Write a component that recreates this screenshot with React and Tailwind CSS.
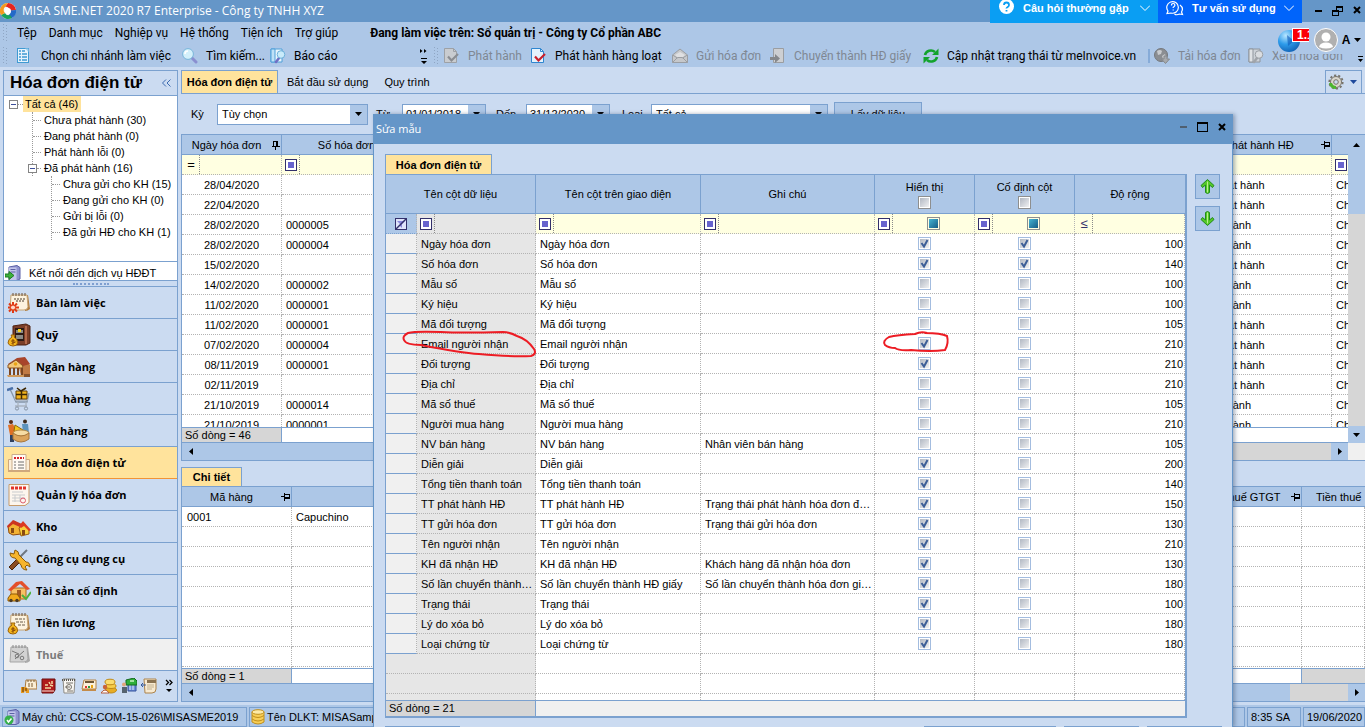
import { Fragment, useState } from "react";

/* ---------- data ---------- */

const menus = ["Tệp", "Danh mục", "Nghiệp vụ", "Hệ thống", "Tiện ích", "Trợ giúp"];

const invoices = [
  { date: "28/04/2020", no: "", status: "Chưa phát hành" },
  { date: "22/04/2020", no: "", status: "Chưa phát hành" },
  { date: "28/02/2020", no: "0000005", status: "Đã phát hành" },
  { date: "28/02/2020", no: "0000004", status: "Đã phát hành" },
  { date: "15/02/2020", no: "", status: "Chưa phát hành" },
  { date: "14/02/2020", no: "0000002", status: "Đã phát hành" },
  { date: "11/02/2020", no: "0000001", status: "Đã phát hành" },
  { date: "11/02/2020", no: "0000001", status: "Chưa phát hành" },
  { date: "07/02/2020", no: "0000004", status: "Chưa phát hành" },
  { date: "08/11/2019", no: "0000001", status: "Chưa phát hành" },
  { date: "02/11/2019", no: "", status: "Chưa phát hành" },
  { date: "21/10/2019", no: "0000014", status: "Đã phát hành" },
  { date: "21/10/2019", no: "0000001", status: "Đã phát hành" },
];

const initialColumns = [
  { name: "Ngày hóa đơn", show: true, pin: true, width: 100 },
  { name: "Số hóa đơn", show: true, pin: true, width: 140 },
  { name: "Mẫu số", show: false, pin: false, width: 100 },
  { name: "Ký hiệu", show: false, pin: false, width: 100 },
  { name: "Mã đối tượng", show: false, pin: false, width: 105 },
  { name: "Email người nhận", show: true, pin: false, width: 210, marked: true },
  { name: "Đối tượng", show: true, pin: false, width: 210 },
  { name: "Địa chỉ", show: false, pin: false, width: 210 },
  { name: "Mã số thuế", show: false, pin: false, width: 105 },
  { name: "Người mua hàng", show: false, pin: false, width: 210 },
  { name: "NV bán hàng", note: "Nhân viên bán hàng", show: false, pin: false, width: 105 },
  { name: "Diễn giải", show: true, pin: false, width: 200 },
  { name: "Tổng tiền thanh toán", show: true, pin: false, width: 140 },
  { name: "TT phát hành HĐ", note: "Trạng thái phát hành hóa đơn điện tử", show: true, pin: false, width: 150 },
  { name: "TT gửi hóa đơn", note: "Trạng thái gửi hóa đơn", show: true, pin: false, width: 130 },
  { name: "Tên người nhận", show: true, pin: false, width: 210 },
  { name: "KH đã nhận HĐ", note: "Khách hàng đã nhận hóa đơn", show: true, pin: false, width: 130 },
  { name: "Số lần chuyển thành HĐ giấy", note: "Số lần chuyển thành hóa đơn giấy", show: true, pin: false, width: 180 },
  { name: "Trạng thái", show: true, pin: false, width: 100 },
  { name: "Lý do xóa bỏ", show: true, pin: false, width: 180 },
  { name: "Loại chứng từ", show: true, pin: false, width: 180 },
];

/* ---------- small glyphs ---------- */

function Triangle({ dir = "down", className = "text-black" }) {
  const points = {
    down: "0,0 7,0 3.5,4",
    up: "0,4 7,4 3.5,0",
    left: "4,0 4,7 0,3.5",
    right: "0,0 0,7 4,3.5",
  };
  const tall = dir === "left" || dir === "right";
  return (
    <svg width={tall ? 4 : 7} height={tall ? 7 : 4} className={`shrink-0 ${className}`} fill="currentColor">
      <polygon points={points[dir]} />
    </svg>
  );
}

function Pin({ upright }) {
  return (
    <svg width="10" height="10" viewBox="0 0 10 10" className="shrink-0" fill="none" stroke="#000" shapeRendering="crispEdges">
      {upright ? (
        <path d="M2.5 1v5M2 1.5h5M6.5 1v5M5.5 1v5M1 6.5h8M4.5 7v3" />
      ) : (
        <path d="M0 4.5h4M3.5 1v8M4 2.5h5M8.5 2v5M4 6.5h5M4 5.5h5" />
      )}
    </svg>
  );
}

function Grip() {
  return (
    <svg width="6" height="18" className="shrink-0" fill="#8fa6c4">
      {[0, 3, 6, 9, 12, 15].map((y) => (
        <Fragment key={y}>
          <rect x="0" y={y} width="1" height="1" />
          <rect x="3" y={y + 1} width="1" height="1" />
        </Fragment>
      ))}
    </svg>
  );
}

function Overflow() {
  return (
    <svg width="8" height="16" viewBox="0 0 8 16" className="shrink-0">
      <path d="M0 1l2.5 2L0 5zM4 1l2.5 2L4 5z" fill="#000" />
      <path d="M1 10h6v1H1zM1 13h6l-3 3z" fill="#000" />
    </svg>
  );
}

/* ---------- toolbar icons ---------- */

function ListIcon() {
  return (
    <svg width="16" height="16" viewBox="0 0 16 16">
      <rect x=".5" y=".5" width="11" height="14" fill="#e6f3fc" stroke="#3f9ad2" />
      <path d="M2 3h2M2 6h2M2 9h2M2 12h2M5 3h3M5 6h5M5 9h5M5 12h5" stroke="#3f9ad2" strokeWidth="1.5" />
      <path d="M8 .5L11.5 4V.5z" fill="#9fd0f0" />
    </svg>
  );
}

function SearchIcon() {
  return (
    <svg width="16" height="16" viewBox="0 0 16 16">
      <path d="M10 10l4 4" stroke="#8a8fd0" strokeWidth="3" strokeLinecap="round" />
      <circle cx="6" cy="6" r="5.4" fill="#d3f0fb" stroke="#78b6da" />
      <path d="M3 6a3 3 0 0 1 3-3" stroke="#fff" strokeWidth="1.5" fill="none" />
    </svg>
  );
}

function ReportIcon({ gray }) {
  const line = gray ? "#8f959c" : "#4f9fd8";
  const face = gray ? "#cdd2d8" : "#e9f5fd";
  return (
    <svg width="16" height="16" viewBox="0 0 16 16">
      <path d="M1 1h11v13H1z" fill={face} stroke={line} />
      <path d="M1 1h4v13H1z" fill={gray ? "#dfe2e5" : "#bfe1f7"} stroke={line} />
      <path d="M9 10l-3 4" stroke={gray ? "#a0a4aa" : "#6f6fc4"} strokeWidth="2.5" strokeLinecap="round" />
      <circle cx="11" cy="6.5" r="3.8" fill={gray ? "#dadde1" : "#c9ebfa"} stroke={gray ? "#9a9fa5" : "#6db0da"} />
    </svg>
  );
}

function DocCheckIcon({ gray }) {
  return (
    <svg width="16" height="16" viewBox="0 0 16 16">
      <path d="M.5.5h9l3 3v11H.5z" fill={gray ? "#c9ccd0" : "#e4f2fd"} stroke={gray ? "#9da1a6" : "#2f86d0"} />
      <path d="M9.5.5v3h3" fill="none" stroke={gray ? "#9da1a6" : "#2f86d0"} />
      <path d="M4 8.500l3.500 4L14 6" fill="none" stroke={gray ? "#8a8d92" : "#c8202c"} strokeWidth="2.2" />
    </svg>
  );
}

function EnvelopeIcon() {
  return (
    <svg width="16" height="16" viewBox="0 0 16 16">
      <path d="M.5 7L8 1l7.500 6v7.500H.5z" fill="#c6c8cb" stroke="#9b9ea3" />
      <path d="M3 7l5-3 5 3-3 3H6z" fill="#dfe0e2" />
      <path d="M.5 14.500l5-5h5l5 5M.5 7l5 3M15.500 7l-5 3" fill="none" stroke="#9b9ea3" />
    </svg>
  );
}

function DocArrowIcon() {
  return (
    <svg width="16" height="16" viewBox="0 0 16 16">
      <path d="M3.500.5h10v14h-10z" fill="#cdcfd2" stroke="#9a9da1" />
      <path d="M0 9h5V6l5 4.500L5 15v-3H0z" fill="#85888c" />
    </svg>
  );
}

function RefreshIcon() {
  return (
    <svg width="16" height="16" viewBox="0 0 16 16" fill="none" stroke="#12a32c" strokeWidth="2.6">
      <path d="M2 7a6 5.500 0 0 1 10-3" />
      <path d="M14 9a6 5.500 0 0 1-10 3" />
      <path d="M15.500.5v6.500H9zM.5 15.500V9H7z" fill="#12a32c" stroke="none" />
    </svg>
  );
}

function DownloadIcon() {
  return (
    <svg width="16" height="16" viewBox="0 0 16 16">
      <circle cx="7" cy="7" r="6.500" fill="#8b8e92" stroke="#75787c" />
      <path d="M3 3q3-2 5 0l-1 3-3 1zM8 8l3-2 1 3-3 2z" fill="#c9cbce" />
      <path d="M10 8h3v3h2.500l-4 4.500L7.500 11H10z" fill="#a7aaae" stroke="#85888c" />
    </svg>
  );
}

/* ---------- sidebar icons ---------- */

function NotePad({ gray, children }) {
  return (
    <svg width="24" height="24" viewBox="0 0 24 24">
      <path d="M18 4h3l2 14q-2 2-5 2z" fill={gray ? "#a9a9a9" : "#b07c3e"} />
      <path d="M4 4h16l1 12q-1 3-4 3H3z" fill={gray ? "#d2d2d2" : "#fdf3df"} stroke={gray ? "#a5a5a5" : "#c8a574"} />
      <path d="M6 2v3M9 2v3M12 2v3M15 2v3M18 2v3" stroke={gray ? "#888" : "#6b5136"} />
      {children}
    </svg>
  );
}

function MoneyBag() {
  return (
    <>
      <path d="M4 12h4l-1 2q4 2 3.500 6-.5 3-4.500 3t-5-3q0-4 4-6z" fill="#f3b41c" stroke="#9c6208" />
      <path d="M7.500 17.500q-3-1-3 .5t3 1-3 1.500M6 16v6" fill="none" stroke="#7b3c05" strokeWidth=".8" />
    </>
  );
}

function DeskIcon() {
  return (
    <NotePad>
      <path d="M7 8h11M9 10h9" stroke="#4a3c2c" strokeDasharray="2 1" />
      <path d="M6 11v11M1 16.500h11M2 12.500l8 8M10 12.500l-8 8" stroke="#e03a14" strokeWidth="2" />
      <circle cx="6" cy="16.500" r="2.500" fill="#ffd9c8" stroke="#e03a14" />
    </NotePad>
  );
}

function SafeIcon() {
  return (
    <svg width="24" height="24" viewBox="0 0 24 24">
      <path d="M6 3l13-2 4 2v17l-4 2H6z" fill="#7c3f28" stroke="#4f2212" />
      <path d="M8 5h9v13H8z" fill="#2c1a14" />
      <path d="M9 7h7v3H9zM9 12h7v4H9z" fill="#8b8a86" />
      <path d="M11 6h3v3h-3z" fill="#f5d423" />
      <path d="M19 3v18" stroke="#b3694a" strokeWidth="2" />
      <MoneyBag />
    </svg>
  );
}

function BankIcon() {
  return (
    <svg width="24" height="24" viewBox="0 0 24 24">
      <path d="M11 8l9-1 3 3v9l-9 2z" fill="#c07a45" />
      <path d="M1 9l9-6 8-1 5 7-7 2z" fill="#a8442b" />
      <path d="M1 10l8-5 7 6-1 2H1z" fill="#f4c878" stroke="#8a5324" />
      <path d="M3 13v7M7 13v7M11 13v7M15 13v7" stroke="#7a4521" strokeWidth="2" />
      <path d="M0 20h17l2 2H1z" fill="#d09a5c" />
      <path d="M17 19h6v3h-6z" fill="#84512d" />
      <circle cx="8.500" cy="9" r="1.800" fill="#e8a414" />
    </svg>
  );
}

function BuyIcon() {
  return (
    <svg width="24" height="24" viewBox="0 0 24 24" fill="none">
      <path d="M3 2l6 13h11l2-9" stroke="#8696a8" strokeWidth="1.3" />
      <path d="M7 11h14M8 13h13M11 15v5M19 15v4M8 19h12" stroke="#aab4c0" strokeWidth="1.3" />
      <path d="M9 4h11v8H9z" fill="#f0b41e" stroke="#6a4305" />
      <path d="M14.500 4v8M9 7.500h11M10 1l4 3 5-3" stroke="#3d2703" strokeWidth="1.5" />
      <circle cx="10" cy="21.500" r="1.600" stroke="#8795a5" />
      <circle cx="19" cy="21.500" r="1.600" stroke="#8795a5" />
      <path d="M0 3l6-2" stroke="#4a70a8" strokeWidth="2.5" />
    </svg>
  );
}

function SellIcon() {
  return (
    <svg width="24" height="24" viewBox="0 0 24 24">
      <circle cx="4" cy="3" r="2" fill="#5a2d14" />
      <path d="M1 6l5-1 3 6-2 5H3z" fill="#e06f24" />
      <path d="M3 16h4v7H3z" fill="#2e3f5f" />
      <circle cx="18" cy="2.500" r="2" fill="#3d2a1a" />
      <path d="M15 5h6l1 9h-6z" fill="#5c93bd" />
      <path d="M8 6l8 5-4 4-5-3z" fill="#f5c81c" stroke="#8f6a06" />
      <ellipse cx="14" cy="14" rx="8" ry="3" fill="#f6dca4" stroke="#b58b49" />
      <path d="M6 14v6q8 6 16 0v-6q-8 6-16 0z" fill="#dba45c" stroke="#a9773b" />
    </svg>
  );
}

function InvoiceIcon() {
  return (
    <svg width="24" height="24" viewBox="0 0 24 24">
      <path d="M1.500 8.500h4v11h-4zM18.500 8.500h4v11h-4z" fill="#fbeed8" stroke="#cfa87c" />
      <path d="M5 3.500h14v16H5z" fill="#fffaf3" stroke="#c9ad8b" />
      <path d="M7 7h10" stroke="#d8232b" strokeWidth="2" strokeDasharray="2 1" />
      <path d="M7 11h2M7 14h2M7 17h2M11 11h6M11 14h6M11 17h6" stroke="#6f6f6f" />
      <path d="M1 20h22" stroke="#cfa87c" strokeWidth="2" />
    </svg>
  );
}

function InvoiceManageIcon() {
  return (
    <svg width="24" height="24" viewBox="0 0 24 24">
      <path d="M2 1.500h20v18l-4 3H2z" fill="#fdf6ee" stroke="#c79b6a" />
      <path d="M4 5h16" stroke="#e2342c" strokeWidth="3" strokeDasharray="3 1" />
      <path d="M5 9h11M5 12h13M5 15h13M5 18h8M8 12v7M13 12v7" stroke="#c9cbcd" />
      <circle cx="16" cy="17.500" r="2.500" fill="none" stroke="#dc5b70" />
    </svg>
  );
}

function WarehouseIcon() {
  return (
    <svg width="24" height="24" viewBox="0 0 24 24">
      <path d="M1 11l6-5 7 5v8l-8 1-4-2z" fill="#f3b234" stroke="#8f4b0c" />
      <path d="M0 11l6-6 9 4-2 3-7-3-5 4z" fill="#cc3520" />
      <path d="M12 13l5-4 5 5v5l-8 2z" fill="#f8cf3d" stroke="#9b5a10" />
      <path d="M12 11l4-5 8 9-2 1-5-5-3 2z" fill="#dc3a23" />
      <path d="M4 13h3v5H4zM15 15h3v5h-3z" fill="#8a4a10" />
    </svg>
  );
}

function ToolsIcon() {
  return (
    <svg width="24" height="24" viewBox="0 0 24 24">
      <path d="M20 3L9 14" stroke="#6f7780" strokeWidth="2" />
      <path d="M10 12l3 3-8 8-3-3z" fill="#8a4c22" stroke="#4b2409" />
      <path d="M3 6l4 1 1-4q4 1 4 5l7 7q4 0 4 5l-3-2-2 2 2 3q-5 0-6-5L8 11q-5 0-5-5z" fill="#f6b52c" stroke="#8b5a0a" />
    </svg>
  );
}

function AssetIcon() {
  return (
    <svg width="24" height="24" viewBox="0 0 24 24">
      <path d="M4 9h15v11H4z" fill="#f7c064" stroke="#b06a1d" />
      <path d="M1 11L9 3l6-1 8 8-3 1-7-6-9 7z" fill="#e4502b" />
      <path d="M10 11h4v8h-4z" fill="#a35a23" />
      <path d="M1 19l3-4h6l3 4v3H1z" fill="#f2a91b" stroke="#8f5a07" />
      <circle cx="4" cy="21.500" r="1.700" fill="#4a3a26" />
      <circle cx="10" cy="21.500" r="1.700" fill="#4a3a26" />
      <path d="M15 16l4 4 5-7" fill="none" stroke="#4db13e" strokeWidth="2" />
    </svg>
  );
}

function SalaryIcon() {
  return (
    <NotePad>
      <path d="M8 8h10M9 11h9M11 14h7" stroke="#6b5d4b" strokeDasharray="3 1" />
      <MoneyBag />
    </NotePad>
  );
}

function TaxIcon() {
  return (
    <NotePad gray>
      <path d="M5 8l7 3M8 16l9-8" stroke="#777" />
      <circle cx="10" cy="13" r="1.800" fill="none" stroke="#777" />
      <circle cx="15" cy="15" r="1.800" fill="none" stroke="#777" />
    </NotePad>
  );
}

const navItems = [
  { label: "Bàn làm việc", Icon: DeskIcon },
  { label: "Quỹ", Icon: SafeIcon },
  { label: "Ngân hàng", Icon: BankIcon },
  { label: "Mua hàng", Icon: BuyIcon },
  { label: "Bán hàng", Icon: SellIcon },
  { label: "Hóa đơn điện tử", Icon: InvoiceIcon, active: true },
  { label: "Quản lý hóa đơn", Icon: InvoiceManageIcon },
  { label: "Kho", Icon: WarehouseIcon },
  { label: "Công cụ dụng cụ", Icon: ToolsIcon },
  { label: "Tài sản cố định", Icon: AssetIcon },
  { label: "Tiền lương", Icon: SalaryIcon },
  { label: "Thuế", Icon: TaxIcon, disabled: true },
];

function ServerIcon({ children }) {
  return (
    <svg width="16" height="16" viewBox="0 0 16 16" className="shrink-0">
      <path d="M4 2l8-1.500 3 2V14l-3 1.500H4z" fill="#8f93cf" stroke="#5c61a6" />
      <path d="M4 2.500h7.500V15H4z" fill="#c3c6ec" />
      <path d="M5.500 4.500h5M5.500 7h5" stroke="#5c61a6" />
      {children}
    </svg>
  );
}

// shortcuts under the navigation list
const shortcuts = [
  {
    label: "Giá thành",
    art: (
      <>
        <path d="M5 2h10l1 9H4z" fill="#fbeed6" stroke="#a8793e" />
        <path d="M6 3h8M7 6h6M7 8h6" stroke="#7b5a30" strokeDasharray="2 1" />
        <path d="M0 9h5l3 3v3H5l-1-3-1 3H0z" fill="#e99a1d" />
        <path d="M2 9v5M5 10v3" stroke="#5f3206" />
      </>
    ),
  },
  {
    label: "Sổ cái",
    art: (
      <>
        <path d="M1 1h13v11l-2 3H1z" fill="#b01c1c" stroke="#6d0c0c" />
        <path d="M4 7h3M8 4l1 2M11 3v3M4 10h6M9 7l3 1" stroke="#f4d9a0" strokeWidth="1.5" />
        <path d="M1 13h12" stroke="#f3e3d8" />
      </>
    ),
  },
  {
    label: "Hợp đồng",
    art: (
      <>
        <path d="M2 1h12l-1 14H3z" fill="#f8f6f2" stroke="#8d8a84" />
        <path d="M1 2h14" stroke="#5b5852" strokeWidth="2" strokeDasharray="1 1" />
        <path d="M5 5h7M4 9h5M6 13h6" stroke="#77736b" />
        <circle cx="8" cy="9" r="2.500" fill="none" stroke="#77736b" />
      </>
    ),
  },
  {
    label: "Ngân sách",
    art: (
      <>
        <path d="M3 2h12v9H1z" fill="#fcf0da" stroke="#b58448" />
        <path d="M4 4h9" stroke="#6d5636" strokeWidth="2" />
        <path d="M1 11h14v2H1z" fill="#c48c4a" />
        <path d="M5 10V8" stroke="#d33" strokeWidth="2" />
        <path d="M8 10V8" stroke="#2a9a3c" strokeWidth="2" />
        <path d="M11 10V7" stroke="#e7a313" strokeWidth="2" />
      </>
    ),
  },
  {
    label: "Thủ quỹ",
    art: (
      <>
        <ellipse cx="10" cy="12" rx="5.500" ry="3" fill="#e8ad25" stroke="#c08a18" />
        <ellipse cx="10" cy="8" rx="5" ry="2.500" fill="#f7cd4a" stroke="#c08a18" />
        <ellipse cx="9" cy="4" rx="5" ry="2.800" fill="#fbdc6d" stroke="#c08a18" />
        <circle cx="4" cy="9" r="2.200" fill="#c9643a" />
        <path d="M0 15q4-6 8 0z" fill="#fff" stroke="#b55a3a" />
      </>
    ),
  },
  {
    label: "Thủ kho",
    art: (
      <>
        <path d="M7 5h8v8H7z" fill="#6f8fd8" stroke="#32509a" />
        <path d="M9 6v6M12 6v6" stroke="#e5ecfb" />
        <path d="M5 2l8-2 3 3v4H5z" fill="#2fae3a" stroke="#156a1e" />
        <path d="M9 3h4" stroke="#c8f0c0" strokeWidth="1.5" />
        <circle cx="3" cy="6.500" r="2" fill="#e2a57c" />
        <path d="M1 9h5v6H1z" fill="#56636f" />
      </>
    ),
  },
  {
    label: "Công văn",
    art: (
      <>
        <path d="M3 1h12v10q0 4-4 4H4z" fill="#f7ead2" stroke="#ac834b" />
        <path d="M6 2h9v3H6z" fill="#8a7352" />
        <path d="M6 7h7M6 9h7M6 11h5" stroke="#c3b291" />
        <path d="M0 7h5M2 5L0 7l2 2" stroke="#35589a" fill="none" />
      </>
    ),
  },
];

/* ---------- building blocks ---------- */

function FilterMark() {
  return (
    <button className="flex size-3 shrink-0 items-center justify-center border border-[#33306b] bg-white" aria-label="Điều kiện lọc">
      <span className="size-1.5 bg-[#6763cd]" />
    </button>
  );
}

function FilterCell({ mark, label, checkbox, className = "bg-[#ffffe1]" }) {
  return (
    <td className={`h-5 border-r border-b border-dotted border-[#b3b3b3] p-0 ${className}`}>
      <div className="flex h-[19px] items-center gap-0.5 overflow-hidden pl-[3px]">
        {mark || <FilterMark />}
        <span className="h-full border-r border-dotted border-[#8a8a8a]" />
        {checkbox ? (
          <span className="flex flex-1 justify-center pr-0.5">
            <input
              type="checkbox"
              aria-label={label}
              className="size-[13px] appearance-none border border-[#8e8f8f] bg-linear-to-br from-[#4cc0dc] to-[#12527e] bg-clip-content p-px"
            />
          </span>
        ) : (
          <input type="text" aria-label={label} className="w-full min-w-0 flex-1 bg-transparent outline-none" />
        )}
      </div>
    </td>
  );
}

function CheckBox({ label, checked, onChange, dark }) {
  return (
    <span className="relative flex size-[13px] bg-white">
      <input
        type="checkbox"
        aria-label={label}
        checked={checked}
        onChange={onChange}
        className={`size-[13px] appearance-none border bg-linear-to-br from-[#aab1bd] to-[#f8f8f8] bg-clip-content p-px ${
          dark ? "border-[#8e8f8f]" : "border-[#a3bcdf]"
        }`}
      />
      {checked && (
        <svg width="13" height="13" className="pointer-events-none absolute inset-0" fill="none" stroke="#3c5e97" strokeWidth="2">
          <path d="M3.500 6l2.500 3.500L9.500 3" />
        </svg>
      )}
    </span>
  );
}

function HeaderCell({ children, pin, colSpan, className = "" }) {
  return (
    <th colSpan={colSpan} className={`h-5 border-r border-b border-[#7ba1cf] bg-[#adc7e7] p-0 font-normal ${className}`}>
      <div className="flex items-center overflow-hidden whitespace-nowrap">
        <span className="flex-1">{children}</span>
        {pin && <Pin upright={pin === "up"} />}
      </div>
    </th>
  );
}

const cell = "h-5 overflow-hidden border-r border-b border-dotted border-[#b3b3b3] p-0 whitespace-nowrap";

function ToolButton({ icon, children, className = "", disabled }) {
  return (
    <button
      disabled={disabled}
      className={`flex shrink-0 items-center gap-2 whitespace-nowrap ${disabled ? "text-[#7f8793]" : "text-black"} ${className}`}
    >
      <span className="shrink-0">{icon}</span>
      {children}
    </button>
  );
}

function Combo({ id, value, options = [], className }) {
  return (
    <span className={`flex h-[21px] border border-[#7ba1cf] bg-white ${className}`}>
      <select id={id} defaultValue={value} className="min-w-0 flex-1 appearance-none bg-white pl-1 outline-none">
        {[value, ...options].map((o) => (
          <option key={o}>{o}</option>
        ))}
      </select>
      <span className="flex w-[17px] items-center justify-center bg-[#adc7e7]">
        <Triangle />
      </span>
    </span>
  );
}

function DateBox({ id, value }) {
  return (
    <span className="flex h-[21px] w-21 border border-[#7ba1cf] bg-white">
      <input id={id} type="text" defaultValue={value} className="min-w-0 flex-1 pl-[3px] outline-none" />
      <button aria-label="Chọn ngày" className="flex w-[17px] items-center justify-center bg-[#adc7e7]">
        <Triangle />
      </button>
    </span>
  );
}

/* ---------- window chrome ---------- */

function TitleBar() {
  return (
    <header className="flex h-[22px] shrink-0 items-center bg-[#6596c8] font-['Open_Sans',sans-serif] text-white">
      <svg width="18" height="18" viewBox="0 0 18 18" className="shrink-0">
        <circle cx="8" cy="9" r="8" fill="#f3f6fb" />
        <path d="M8 1a8 8 0 0 1 8 7l-6 1a4 4 0 0 0-5-4z" fill="#e5261f" />
        <path d="M16 8a8 8 0 0 1-5 8.500l-3-3a4 4 0 0 0 2-5z" fill="#2469c8" />
        <path d="M12 16A8 8 0 0 1 1 13l4-2a4 4 0 0 0 5 2z" fill="#17a35d" />
        <path d="M1 13A8 8 0 0 1 8 1L5 5a4 4 0 0 0 0 6z" fill="#f39a1d" />
        <circle cx="8" cy="9" r="3" fill="#fff" />
      </svg>
      <h1 className="flex-1 pl-1 text-[12px]">MISA SME.NET 2020 R7 Enterprise - Công ty TNHH XYZ</h1>
      <div className="z-10 flex h-[23px] self-start font-['Liberation_Sans',sans-serif] text-[11px] font-bold">
        <button className="flex w-42 items-center bg-[#0a9ef3] pr-2 pb-2 pl-2">
          <svg width="17" height="17" viewBox="0 0 17 17">
            <circle cx="8.500" cy="7.500" r="7.500" fill="#fff" />
            <path d="M6 6q0-2.500 2.500-2.500T11 6q0 1.200-1.300 2T8.500 9.500M8.500 11v1.500" stroke="#0a9ef3" strokeWidth="1.8" fill="none" />
          </svg>
          <span className="flex-1 pl-2 text-left">Câu hỏi thường gặp</span>
          <svg width="10" height="6" fill="none" stroke="#fff">
            <path d="M0 .5l5 5 5-5" />
          </svg>
        </button>
        <button className="flex w-36 items-center bg-[#0064fb] pr-2 pb-2 pl-2">
          <svg width="18" height="16" viewBox="0 0 18 16" fill="none" stroke="#fff" strokeWidth="1.2">
            <path d="M2 11a5.800 5.800 0 1 1 3 2l-4 .5z" />
            <path d="M14 5q4 3 1.500 7l1 2.500-3-.5q-3 1.500-5 0" />
            <path d="M5.500 5.500q0-2 1.700-2t1.700 1.800q0 1-1.700 2v.7M7.200 9.500v1" />
          </svg>
          <span className="flex-1 pl-2 text-left">Tư vấn sử dụng</span>
          <svg width="10" height="6" fill="none" stroke="#fff">
            <path d="M0 .5l5 5 5-5" />
          </svg>
        </button>
      </div>
      <div className="flex w-[63px] items-center justify-end gap-2.5 pr-1 text-black">
        <button aria-label="Thu nhỏ">
          <svg width="7" height="10"><path d="M0 4h7v2H0z" /></svg>
        </button>
        <button aria-label="Khôi phục">
          <svg width="11" height="10" fill="none" stroke="#000" shapeRendering="crispEdges">
            <path d="M.5 4.500h6v5h-6zM.5 5.500h6M4.500 4V.5h6v5h-4M4.500 1.500h6" />
          </svg>
        </button>
        <button aria-label="Đóng">
          <svg width="8" height="10" stroke="#000" strokeWidth="2"><path d="M1 1l6 6M7 1L1 7" /></svg>
        </button>
      </div>
    </header>
  );
}

function MenuAndToolbar() {
  return (
    <div className="relative shrink-0 bg-[#adc7e7] font-['Roboto',sans-serif] text-[12px] text-black">
      <nav className="flex h-[22px] items-center gap-3 pl-[3px]">
        <span className="-mr-1">
          <Grip />
        </span>
        {menus.map((m) => (
          <button key={m}>{m}</button>
        ))}
        <span className="pl-5 font-bold">Đang làm việc trên: Sổ quản trị - Công ty Cổ phần ABC</span>
      </nav>

      <div className="flex h-[23px] items-center overflow-hidden">
        <div className="flex w-[434px] shrink-0 items-center pl-[3px]">
          <Grip />
          <ToolButton icon={<ListIcon />} className="ml-2 w-[165px]">Chọn chi nhánh làm việc</ToolButton>
          <ToolButton icon={<SearchIcon />} className="w-[88px]">Tìm kiếm...</ToolButton>
          <ToolButton icon={<ReportIcon />} className="flex-1">Báo cáo</ToolButton>
          <span className="pr-1.5"><Overflow /></span>
        </div>
        <Grip />
        <ToolButton icon={<DocCheckIcon gray />} className="ml-1 w-[87px]" disabled>Phát hành</ToolButton>
        <ToolButton icon={<DocCheckIcon />} className="w-[141px]">Phát hành hàng loạt</ToolButton>
        <ToolButton icon={<EnvelopeIcon />} className="w-[98px]" disabled>Gửi hóa đơn</ToolButton>
        <ToolButton icon={<DocArrowIcon />} className="w-[153px]" disabled>Chuyển thành HĐ giấy</ToolButton>
        <ToolButton icon={<RefreshIcon />} className="w-[225px]">Cập nhật trạng thái từ meInvoice.vn</ToolButton>
        <span className="mr-1 h-3.5 w-0.5 shrink-0 bg-[#86abd8]" />
        <ToolButton icon={<DownloadIcon />} className="w-[94px]" disabled>Tải hóa đơn</ToolButton>
        <ToolButton icon={<ReportIcon gray />} className="flex-1" disabled>Xem hóa đơn</ToolButton>
        <svg width="7" height="7" className="mt-2 shrink-0"><path d="M0 0h5v1H0zM0 3h5L2.500 6z" /></svg>
      </div>

      {/* account area floats over both bars */}
      <div className="absolute top-1 right-1 flex h-7 items-center bg-[#adc7e7] font-['Liberation_Sans',sans-serif] text-[12px] font-bold">
        <span className="relative mr-1 h-6 w-8">
          <svg width="24" height="24" viewBox="0 0 24 24">
            <defs>
              <radialGradient id="orb" cx=".35" cy=".25" r=".9">
                <stop offset="0" stopColor="#b9e6ff" />
                <stop offset=".45" stopColor="#2d9bea" />
                <stop offset="1" stopColor="#0a54a8" />
              </radialGradient>
            </defs>
            <circle cx="11" cy="13" r="11" fill="url(#orb)" />
            <path d="M9 7l7 6-6 5z" fill="#0d57b5" opacity=".6" />
          </svg>
          <span className="absolute top-0 left-3.5 h-3.5 w-[17px] overflow-hidden border border-r-0 border-white bg-[#fb0007] pl-1 leading-3 text-white">
            1.1
          </span>
        </span>
        <button className="flex items-center gap-0.5" aria-label="Tài khoản A">
          <svg width="24" height="24" viewBox="0 0 24 24">
            <circle cx="12" cy="12" r="11.500" fill="#b0b0b0" stroke="#fff" />
            <circle cx="12" cy="9" r="4.500" fill="#fff" />
            <path d="M5 19q1-4.500 7-4.500t7 4.500q-7 3-14 0z" fill="#fff" />
          </svg>
          <span className="w-3">A</span>
          <Triangle />
        </button>
      </div>
    </div>
  );
}

/* ---------- sidebar ---------- */

function ExpandBox() {
  return (
    <svg width="9" height="9" className="shrink-0" shapeRendering="crispEdges">
      <rect x=".5" y=".5" width="8" height="8" fill="#fff" stroke="#848484" />
      <path d="M2 4.500h5" stroke="#3d4f9b" />
    </svg>
  );
}

function TreeLeaf({ children }) {
  return (
    <li className="flex h-4 items-center gap-[3px]">
      <span className="w-2 border-t border-dotted border-[#9a9a9a]" />
      <button className="whitespace-nowrap">{children}</button>
    </li>
  );
}

function Sidebar() {
  return (
    <aside className="flex w-[175px] shrink-0 flex-col border border-[#7ba1cf] bg-[#cbdbf1]">
      <div className="flex h-[25px] shrink-0 items-center justify-between border-b border-[#7ba1cf] pr-1.5 pl-1.5">
        <h2 className="text-[17px] font-bold whitespace-nowrap">Hóa đơn điện tử</h2>
        <button aria-label="Thu gọn">
          <svg width="9" height="8" fill="none" stroke="#3c6bb0">
            <path d="M4 .5L.5 4 4 7.500M8.500.5L5 4l3.500 3.500" />
          </svg>
        </button>
      </div>

      <div className="min-h-0 flex-1 overflow-hidden bg-white">
        <div className="flex h-4 items-center pl-[5px]">
          <ExpandBox />
          <span className="w-[5px] border-t border-dotted border-[#9a9a9a]" />
          <button className="h-4 bg-[#ffe39c] pr-[3px] pl-0.5 whitespace-nowrap">Tất cả (46)</button>
        </div>
        <ul className="ml-[28px] border-l border-dotted border-[#9a9a9a]">
          <TreeLeaf>Chưa phát hành (30)</TreeLeaf>
          <TreeLeaf>Đang phát hành (0)</TreeLeaf>
          <TreeLeaf>Phát hành lỗi (0)</TreeLeaf>
          <li className="-ml-[5px] flex h-4 items-center">
            <ExpandBox />
            <span className="mr-[3px] w-1 border-t border-dotted border-[#9a9a9a]" />
            <button>Đã phát hành (16)</button>
          </li>
        </ul>
        <ul className="ml-[47px] border-l border-dotted border-[#9a9a9a]">
          <TreeLeaf>Chưa gửi cho KH (15)</TreeLeaf>
          <TreeLeaf>Đang gửi cho KH (0)</TreeLeaf>
          <TreeLeaf>Gửi bị lỗi (0)</TreeLeaf>
          <TreeLeaf>Đã gửi HĐ cho KH (1)</TreeLeaf>
        </ul>
      </div>

      <button className="flex h-5 shrink-0 items-start gap-2 overflow-hidden border-y border-[#7ba1cf] bg-white pt-[3px] pl-px text-left whitespace-nowrap">
        <ServerIcon>
          <path d="M0 9h4V6.500l5 4-5 4V12H0z" fill="#3db13a" stroke="#1d7a22" />
        </ServerIcon>
        Kết nối đến dịch vụ HĐĐT
      </button>
      <div className="flex h-[5px] shrink-0 items-center justify-center">
        <span className="w-9 border-t-2 border-dotted border-[#7f9fd0]" />
      </div>

      <nav className="shrink-0 border-t border-[#7ba1cf] font-['Open_Sans',sans-serif] text-[11px] font-bold">
        {navItems.map(({ label, Icon, active, disabled }) => (
          <button
            key={label}
            disabled={disabled}
            className={`flex h-8 w-full items-center gap-[5px] border-b pl-[3px] ${
              active ? "border-[#f29436] bg-[#ffe39c]" : "border-[#7ba1cf]"
            } ${disabled ? "bg-[#f0f0f0] text-[#7a7a7a]" : "text-black"}`}
          >
            <Icon />
            {label}
          </button>
        ))}
      </nav>
      <div className="flex h-[30px] shrink-0 items-center gap-1 pl-[17px]">
        {shortcuts.map((s) => (
          <button key={s.label} aria-label={s.label}>
            <svg width="16" height="16" viewBox="0 0 16 16">{s.art}</svg>
          </button>
        ))}
        <button aria-label="Thêm" className="pl-1">
          <svg width="8" height="14" fill="none" stroke="#000">
            <path d="M1 1l2.500 2.500L1 6M4.500 1L7 3.500 4.500 6" strokeWidth="1.3" />
            <path d="M1 10h6l-3 3z" fill="#000" stroke="none" />
          </svg>
        </button>
      </div>
    </aside>
  );
}

/* ---------- main area ---------- */

function HScroll({ trackClass }) {
  return (
    <div className="flex h-[19px] shrink-0 border-y border-[#7ba1cf] bg-[#d6d6d6]">
      <button aria-label="Cuộn trái" className="flex w-[17px] items-center justify-center bg-[#adc7e7]">
        <Triangle dir="left" />
      </button>
      <span className="flex-1 bg-[#adc7e7]" />
      <span className={trackClass} />
      <button aria-label="Cuộn phải" className="flex w-[17px] items-center justify-center bg-[#adc7e7]">
        <Triangle dir="right" />
      </button>
    </div>
  );
}

function InvoiceGrid() {
  return (
    <section className="flex h-[327px] shrink-0 border-t border-l border-[#7ba1cf] bg-white">
      <div className="flex min-w-0 flex-1 flex-col">
        <div className="min-h-0 flex-1 overflow-hidden">
          <table className="w-full table-fixed border-separate border-spacing-0">
            <colgroup>
              <col className="w-[100px]" />
              <col className="w-[140px]" />
              <col />
              <col className="w-[150px]" />
              <col className="w-[16px]" />
            </colgroup>
            <thead>
              <tr>
                <HeaderCell pin="up">Ngày hóa đơn</HeaderCell>
                <HeaderCell pin="side">Số hóa đơn</HeaderCell>
                <HeaderCell />
                <HeaderCell pin="side">TT phát hành HĐ</HeaderCell>
                <th className="h-5 border-b border-[#7ba1cf] bg-[#adc7e7] p-0" />
              </tr>
            </thead>
            <tbody>
              <tr>
                <FilterCell label="Lọc ngày hóa đơn" mark={<button className="w-3 text-[13px] leading-none">=</button>} />
                <FilterCell label="Lọc số hóa đơn" />
                <FilterCell label="Lọc" />
                <FilterCell label="Lọc trạng thái" />
                <td className="overflow-hidden border-b border-dotted border-[#b3b3b3] bg-[#ffffe1] p-0 pl-[3px]">
                  <FilterMark />
                </td>
              </tr>
              {invoices.map((r, i) => (
                <tr key={i}>
                  <td className={`${cell} text-center`}>{r.date}</td>
                  <td className={`${cell} pl-1`}>{r.no}</td>
                  <td className={cell} />
                  <td className={`${cell} pl-[3px]`}>{r.status}</td>
                  <td className="overflow-hidden border-b border-dotted border-[#b3b3b3] p-0 pl-1 whitespace-nowrap">
                    Chưa gửi
                  </td>
                </tr>
              ))}
            </tbody>
          </table>
        </div>
        <div className="flex h-[15px] shrink-0 border-t border-[#7ba1cf]">
          <span className="w-[100px] border-r border-[#7ba1cf] bg-[#d6d6d6] pl-[3px] leading-[14px]">Số dòng = 46</span>
        </div>
        <HScroll trackClass="w-44 bg-[#d6d6d6]" />
      </div>
      <div className="flex w-[17px] shrink-0 flex-col bg-[#d6d6d6]">
        <button aria-label="Cuộn lên" className="flex h-5 items-center justify-center bg-[#adc7e7]">
          <Triangle dir="up" />
        </button>
        <span className="h-[59px] bg-[#adc7e7]" />
        <span className="flex-1" />
        <button aria-label="Cuộn xuống" className="flex h-[17px] items-center justify-center bg-[#adc7e7]">
          <Triangle />
        </button>
        <span className="h-[18px] border-b border-[#7ba1cf] bg-[#f0f0f0]" />
      </div>
    </section>
  );
}

function DetailGrid() {
  return (
    <section className="flex min-h-0 flex-1 flex-col border-t border-l border-[#7ba1cf] bg-white">
      <div className="min-h-0 flex-1 overflow-hidden">
        <table className="w-full table-fixed border-separate border-spacing-0">
          <colgroup>
            <col className="w-[110px]" />
            <col />
            <col className="w-[100px]" />
            <col className="w-[63px]" />
          </colgroup>
          <thead>
            <tr>
              <HeaderCell pin="side">Mã hàng</HeaderCell>
              <HeaderCell />
              <HeaderCell pin="side">% thuế GTGT</HeaderCell>
              <th className="h-5 overflow-hidden border-b border-[#7ba1cf] bg-[#adc7e7] p-0 pl-3.5 text-left font-normal whitespace-nowrap">
                Tiền thuế
              </th>
            </tr>
          </thead>
          <tbody>
            <tr>
              <td className={`${cell} pl-[5px]`}>0001</td>
              <td className={`${cell} pl-1`}>Capuchino</td>
              <td className={cell} />
              <td className={cell} />
            </tr>
            {Array.from({ length: 8 }, (_, i) => (
              <tr key={i}>
                <td className={cell} />
                <td className={cell} />
                <td className={cell} />
                <td className={cell} />
              </tr>
            ))}
          </tbody>
        </table>
      </div>
      <div className="flex h-[15px] shrink-0 border-t border-[#7ba1cf]">
        <span className="w-[110px] border-r border-[#7ba1cf] bg-[#d6d6d6] pl-[3px] leading-[14px]">Số dòng = 1</span>
        <span className="flex-1 border-r border-[#7ba1cf]" />
        <span className="w-[63px] bg-[#d6d6d6]" />
      </div>
      <HScroll trackClass="w-[58px] bg-[#d6d6d6]" />
    </section>
  );
}

function MainArea() {
  return (
    <main className="flex min-w-0 flex-1 flex-col">
      <div className="flex h-6 shrink-0 items-end border-b border-[#7ba1cf] pr-[3px]" role="tablist">
        <button role="tab" aria-selected="true" className="h-full w-[97px] border border-b-0 border-[#7ba1cf] bg-[#ffe39c] font-bold whitespace-nowrap">
          Hóa đơn điện tử
        </button>
        <button role="tab" aria-selected="false" className="h-full pl-[9px]">Bắt đầu sử dụng</button>
        <button role="tab" aria-selected="false" className="h-full flex-1 pl-4 text-left">Quy trình</button>
        <button aria-label="Tùy chọn" className="flex h-full w-[37px] items-center gap-1.5 border border-b-0 border-[#7ba1cf] pl-0.5">
          <svg width="16" height="16" viewBox="0 0 16 16">
            <circle cx="8" cy="8" r="5.500" fill="#d9d6cc" stroke="#77736a" />
            <circle cx="8" cy="8" r="6.700" fill="none" stroke="#77736a" strokeWidth="1.8" strokeDasharray="2.200 2" />
            <circle cx="8" cy="8" r="2.300" fill="#cbdbf1" stroke="#77736a" />
            <path d="M1 9q1 6 7 6v-3q-3 0-4-3z" fill="#4cb52e" />
          </svg>
          <Triangle className="text-[#1f4a9c]" />
        </button>
      </div>

      <div className="flex h-10 shrink-0 items-center pl-2.5">
        <label htmlFor="period" className="w-[26px]">Kỳ</label>
        <Combo id="period" value="Tùy chọn" options={["Tháng này", "Năm nay"]} className="w-[151px]" />
        <label htmlFor="from" className="w-[34px] pl-2">Từ</label>
        <DateBox id="from" value="01/01/2018" />
        <label htmlFor="to" className="w-10 pl-2.5">Đến</label>
        <DateBox id="to" value="31/12/2020" />
        <label htmlFor="kind" className="w-[41px] pl-3">Loại</label>
        <Combo id="kind" value="Tất cả" className="w-[177px]" />
        <button className="ml-1.5 h-6 w-22 border border-[#7ba1cf] bg-[#adc7e7]">Lấy dữ liệu</button>
      </div>

      <InvoiceGrid />

      <div className="flex h-[25px] shrink-0 items-end">
        <button className="h-[19px] w-[61px] border border-b-0 border-[#7ba1cf] bg-[#ffe39c] font-bold">Chi tiết</button>
      </div>
      <DetailGrid />
    </main>
  );
}

function StatusBar() {
  const box = "flex items-center gap-0.5 border border-[#7ba1cf] whitespace-nowrap";
  return (
    <footer className="flex h-[22px] shrink-0 gap-0.5 bg-[#adc7e7] pt-0.5 pl-0.5">
      <div className={`${box} w-[245px] pl-px`}>
        <ServerIcon>
          <circle cx="5" cy="11" r="4.500" fill="#35b04a" />
          <path d="M3 11l1.500 2L7.500 9.500" stroke="#fff" strokeWidth="1.5" fill="none" />
        </ServerIcon>
        Máy chủ: CCS-COM-15-026\MISASME2019
      </div>
      <div className={`${box} flex-1 pl-px`}>
        <svg width="14" height="16" viewBox="0 0 14 16" className="shrink-0">
          <path d="M1 3v10q6 4 12 0V3z" fill="#f8cf57" stroke="#c08f1c" />
          <ellipse cx="7" cy="3" rx="6" ry="2.300" fill="#fdeaa6" stroke="#c08f1c" />
          <path d="M1 6.500q6 4 12 0M1 10q6 4 12 0" fill="none" stroke="#c08f1c" />
        </svg>
        Tên DLKT: MISASample
      </div>
      <div className={`${box} w-[54px] pl-[3px]`}>8:35 SA</div>
      <div className={`${box} w-[62px] pl-[3px]`}>19/06/2020</div>
    </footer>
  );
}

/* ---------- template dialog ---------- */

function ArrowButton({ up }) {
  return (
    <button aria-label={up ? "Lên" : "Xuống"} className="flex size-[25px] items-center justify-center border border-[#7ba1cf] bg-[#adc7e7]">
      <svg width="17" height="17" viewBox="0 0 17 17" className={up ? "" : "rotate-180"}>
        <path
          d="M8.500 1.500l6.500 6-1.500 2L10.500 7v7.500q-2 2-4 0V7l-3 2.500L2 7.500z"
          fill="#55c927"
          stroke="#218a1c"
          strokeLinejoin="round"
        />
        <path d="M8.500 3.500v11" stroke="#b8ef8e" />
      </svg>
    </button>
  );
}

function TemplateDialog() {
  const [columns, setColumns] = useState(initialColumns);
  const toggle = (index, key) =>
    setColumns(columns.map((c, i) => (i === index ? { ...c, [key]: !c[key] } : c)));

  return (
    <div
      role="dialog"
      aria-label="Sửa mẫu"
      className="absolute top-[114px] right-[132px] bottom-0 left-[373px] flex flex-col overflow-hidden border-x border-[#6596c8] bg-[#cbdbf1] shadow-[2px_0_4px_rgba(60,80,110,0.45)]"
    >
      <div className="flex h-[30px] shrink-0 items-center bg-[#6596c8] pr-1.5 pl-0.5 font-['Open_Sans',sans-serif] text-white">
        <h2 className="flex-1">Sửa mẫu</h2>
        <div className="flex items-center gap-2.5 pb-1">
          <button aria-label="Thu nhỏ">
            <svg width="7" height="10"><path d="M0 4h7v2H0z" fill="#4f5f70" /></svg>
          </button>
          <button aria-label="Phóng to">
            <svg width="11" height="10" fill="none" stroke="#000" shapeRendering="crispEdges">
              <path d="M.5.5h10v9H.5zM0 1.500h11" />
            </svg>
          </button>
          <button aria-label="Đóng">
            <svg width="8" height="10" stroke="#000" strokeWidth="2"><path d="M1 2l6 6M7 2L1 8" /></svg>
          </button>
        </div>
      </div>

      <div className="flex shrink-0 pt-2.5 pl-[11px]">
        <button className="h-5 w-[107px] border border-b-0 border-[#7ba1cf] bg-[#ffe39c] font-bold">Hóa đơn điện tử</button>
      </div>

      <div className="flex min-h-0 flex-1 gap-2 pr-3 pl-[11px]">
        <div className="flex min-w-0 flex-1 flex-col border border-r-2 border-b-2 border-[#7ba1cf] bg-white">
          <div className="min-h-0 flex-1 overflow-hidden">
            <table className="w-full table-fixed border-separate border-spacing-0">
              <colgroup>
                <col className="w-[31px]" />
                <col className="w-[119px]" />
                <col className="w-[165px]" />
                <col className="w-[174px]" />
                <col className="w-[100px]" />
                <col className="w-[100px]" />
                <col />
              </colgroup>
              <thead>
                <tr className="h-[39px]">
                  <HeaderCell colSpan={2}>Tên cột dữ liệu</HeaderCell>
                  <HeaderCell>Tên cột trên giao diện</HeaderCell>
                  <HeaderCell>Ghi chú</HeaderCell>
                  {["Hiển thị", "Cố định cột"].map((t) => (
                    <HeaderCell key={t}>
                      <span className="flex flex-col items-center gap-px">
                        {t}
                        <CheckBox label={`Chọn tất cả ${t}`} dark />
                      </span>
                    </HeaderCell>
                  ))}
                  <HeaderCell className="border-r-0">Độ rộng</HeaderCell>
                </tr>
              </thead>
              <tbody>
                <tr>
                  <td className="border-r border-b border-dotted border-[#b3b3b3] border-b-[#7ba1cf] bg-[#adc7e7] p-0">
                    <button aria-label="Xóa lọc" className="flex w-full justify-center">
                      <svg width="12" height="12" fill="none" stroke="#33306b">
                        <rect x=".5" y=".5" width="11" height="11" fill="#dfe4fa" />
                        <path d="M2 3h8L7 6v4L5 8V6z" fill="#8b88dc" stroke="none" />
                        <path d="M1 11L11 1" strokeWidth="1.5" />
                      </svg>
                    </button>
                  </td>
                  <FilterCell label="Lọc tên cột dữ liệu" className="bg-[#e6e6e6]" />
                  <FilterCell label="Lọc tên cột trên giao diện" />
                  <FilterCell label="Lọc ghi chú" />
                  <FilterCell label="Lọc hiển thị" checkbox />
                  <FilterCell label="Lọc cố định cột" checkbox />
                  <FilterCell label="Lọc độ rộng" mark={<button className="w-3 text-[13px] leading-none text-[#33306b]">≤</button>} />
                </tr>
                {columns.map((c, i) => (
                  <tr key={c.name}>
                    <td className="h-5 border-r border-b border-r-[#b3b3b3] border-b-[#7ba1cf] bg-[#f0f0f0] p-0 [border-right-style:dotted]" />
                    <td className="relative h-5 border-r border-b border-dotted border-[#b3b3b3] bg-[#e6e6e6] p-0 pl-1">
                      <div className="truncate">{c.name}</div>
                      {c.marked && (
                        <svg width="140" height="32" className="pointer-events-none absolute -top-1.5 -left-4 z-10" fill="none" stroke="#ed1c24" strokeWidth="2">
                          <path d="M102 4Q60 5 40 4Q14 3 7 5Q1 8 3 12Q5 17 20 17Q60 25 78 26Q110 29 130 28Q136 26 133 21Q126 11 116 8Q108 4 102 4" />
                        </svg>
                      )}
                    </td>
                    <td className={`${cell} pl-1`}>{c.name}</td>
                    <td className={`${cell} pr-0.5 pl-1`}>
                      <div className="truncate">{c.note}</div>
                    </td>
                    <td className="relative h-5 border-r border-b border-dotted border-[#b3b3b3] p-0">
                      <div className="flex justify-center">
                        <CheckBox label={`Hiển thị ${c.name}`} checked={c.show} onChange={() => toggle(i, "show")} />
                      </div>
                      {c.marked && (
                        <svg width="72" height="28" className="pointer-events-none absolute -top-1.5 left-1.5 z-10" fill="none" stroke="#ed1c24" strokeWidth="2">
                          <path d="M46 5Q40 3 34 6Q16 7 8 9Q1 13 4 17Q8 20 14 20Q18 23 30 22Q50 24 64 22Q68 15 66 8Q60 5 44 5" />
                        </svg>
                      )}
                    </td>
                    <td className={cell}>
                      <div className="flex justify-center">
                        <CheckBox label={`Cố định ${c.name}`} checked={c.pin} onChange={() => toggle(i, "pin")} />
                      </div>
                    </td>
                    <td className={`${cell} pr-px text-right`}>{c.width}</td>
                  </tr>
                ))}
                {[0, 1, 2].map((i) => (
                  <tr key={i}>
                    <td colSpan={2} className={`${cell} bg-[#e6e6e6]`} />
                    <td className={cell} />
                    <td className={cell} />
                    <td className={cell} />
                    <td className={cell} />
                    <td className={cell} />
                  </tr>
                ))}
              </tbody>
            </table>
          </div>
          <div className="flex h-4 shrink-0 border-t border-[#7ba1cf] bg-[#f0f0f0]">
            <span className="w-[150px] border-r border-[#7ba1cf] bg-[#d6d6d6] pl-[3px] leading-[15px]">Số dòng = 21</span>
          </div>
        </div>
        <div className="flex flex-col gap-[7px]">
          <ArrowButton up />
          <ArrowButton />
        </div>
      </div>

      {/* the dialog runs past the lower edge of the screen, only the button tops show */}
      <div className="flex h-[9px] shrink-0 gap-2 overflow-hidden pt-2 pr-2.5 pl-[11px]">
        <button aria-label="Trợ giúp" className="h-6 w-[75px] border border-[#7ba1cf] bg-[#adc7e7]" />
        <span className="flex-1" />
        <button aria-label="Lấy lại ngầm định" className="h-6 w-[132px] border border-[#7ba1cf] bg-[#adc7e7]" />
        <button aria-label="Cất" className="h-6 w-[75px] border border-[#7ba1cf] bg-[#adc7e7]" />
        <button aria-label="Hủy bỏ" className="h-6 w-[75px] border border-[#7ba1cf] bg-[#adc7e7]" />
      </div>
    </div>
  );
}

export default function App() {
  return (
    <div className="relative flex h-screen flex-col overflow-hidden bg-[#cbdbf1] font-['Liberation_Sans',Arial,sans-serif] text-[11px] leading-4 text-black">
      <TitleBar />
      <MenuAndToolbar />
      <div className="flex min-h-0 flex-1 gap-[3px] pt-[3px] pb-[3px] pl-[3px]">
        <Sidebar />
        <MainArea />
      </div>
      <StatusBar />
      <TemplateDialog />
    </div>
  );
}
